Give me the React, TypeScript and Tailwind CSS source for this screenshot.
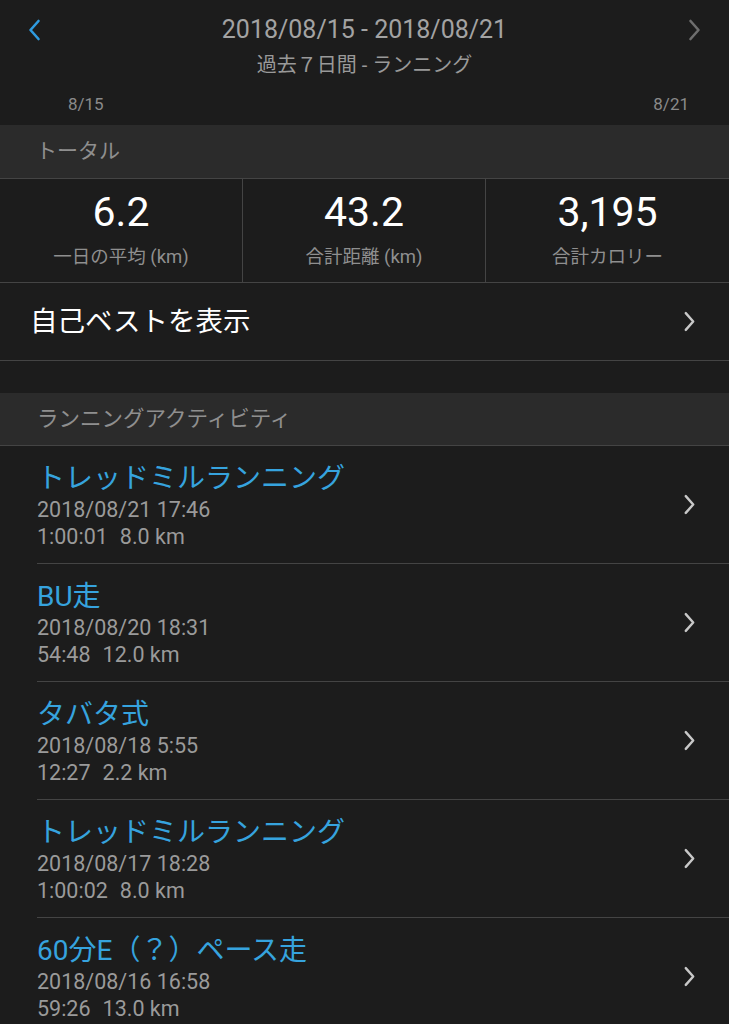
import React from 'react';

interface Activity {
  title: string;
  date: string;
  time: string;
  distance: string;
}

const activities: Activity[] = [
  { title: 'トレッドミルランニング', date: '2018/08/21 17:46', time: '1:00:01', distance: '8.0 km' },
  { title: 'BU走', date: '2018/08/20 18:31', time: '54:48', distance: '12.0 km' },
  { title: 'タバタ式', date: '2018/08/18 5:55', time: '12:27', distance: '2.2 km' },
  { title: 'トレッドミルランニング', date: '2018/08/17 18:28', time: '1:00:02', distance: '8.0 km' },
  { title: '60分E（？）ペース走', date: '2018/08/16 16:58', time: '59:26', distance: '13.0 km' },
];

const stats = [
  { value: '6.2', label: '一日の平均 (km)' },
  { value: '43.2', label: '合計距離 (km)' },
  { value: '3,195', label: '合計カロリー' },
];

function Chevron({ className, left }: { className?: string; left?: boolean }) {
  return (
    <svg viewBox="0 0 14 22" className={className} fill="none" stroke="currentColor" strokeWidth="2.6" strokeLinecap="round" strokeLinejoin="round">
      {left ? <path d="M11 2 L3 11 L11 20" /> : <path d="M3 2 L11 11 L3 20" />}
    </svg>
  );
}

export default function App() {
  return (
    <div
      className="w-[729px] h-[1024px] overflow-hidden bg-[#1c1c1c]"
      style={{ fontFamily: 'Roboto, "Noto Sans CJK JP", sans-serif' }}
    >
      {/* ヘッダー */}
      <div className="h-[125px] relative">
        <div className="flex items-start justify-between px-[27px] pt-[19px]">
          <Chevron left className="w-[15px] h-[22px] text-[#2f9be0]" />
          <Chevron className="w-[15px] h-[22px] text-[#6e6e6e]" />
        </div>
        <div className="absolute top-[13px] left-0 right-0 flex flex-col items-center">
          <div className="text-[25px] leading-[34px] text-[#a3a3a3]">2018/08/15 - 2018/08/21</div>
          <div className="text-[20px] leading-[28px] mt-[4px] text-[#999999]">過去７日間 - ランニング</div>
        </div>
        <div className="flex justify-between pl-[68px] pr-[40px] mt-[51px] text-[17px] text-[#8a8a8a]">
          <span>8/15</span>
          <span>8/21</span>
        </div>
      </div>

      {/* トータル */}
      <div className="h-[54px] bg-[#2b2b2b] flex items-center px-[36px] text-[21px] text-[#8f8f8f] border-b border-[#444444]">
        トータル
      </div>
      <div className="grid grid-cols-3 h-[104px] border-b border-[#444444]">
        {stats.map((s, i) => (
          <div
            key={s.label}
            className={`flex flex-col items-center pt-[9px] ${i < 2 ? 'border-r border-[#444444]' : ''}`}
          >
            <div className="text-[41px] leading-[48px] text-white">{s.value}</div>
            <div className="text-[18.5px] leading-[26px] mt-[8px] text-[#8f8f8f]">{s.label}</div>
          </div>
        ))}
      </div>
      <div className="h-[78px] flex items-center justify-between pl-[30px] pr-[33px] border-b border-[#444444]">
        <span className="text-[27.5px] text-white">自己ベストを表示</span>
        <Chevron className="w-[13px] h-[21px] text-[#c8c8c8]" />
      </div>

      <div className="h-[32px]" />

      {/* ランニングアクティビティ */}
      <div className="h-[53px] bg-[#2b2b2b] flex items-center px-[37px] text-[21.5px] text-[#8f8f8f] border-b border-[#444444]">
        ランニングアクティビティ
      </div>
      <div className="pl-[37px]">
        {activities.map((a, i) => (
          <div key={i} className="h-[118px] flex items-center justify-between pr-[33px] border-b border-[#444444]">
            <div className="flex flex-col pt-[2px]">
              <div className="text-[28px] leading-[34px] text-[#36a3de]">{a.title}</div>
              <div className="text-[21.5px] leading-[27px] text-[#9a9a9a]">{a.date}</div>
              <div className="flex text-[21.5px] leading-[27px] text-[#9a9a9a]">
                <span>{a.time}</span>
                <span className="ml-[12px]">{a.distance}</span>
              </div>
            </div>
            <Chevron className="w-[13px] h-[21px] text-[#c8c8c8]" />
          </div>
        ))}
      </div>
    </div>
  );
}
